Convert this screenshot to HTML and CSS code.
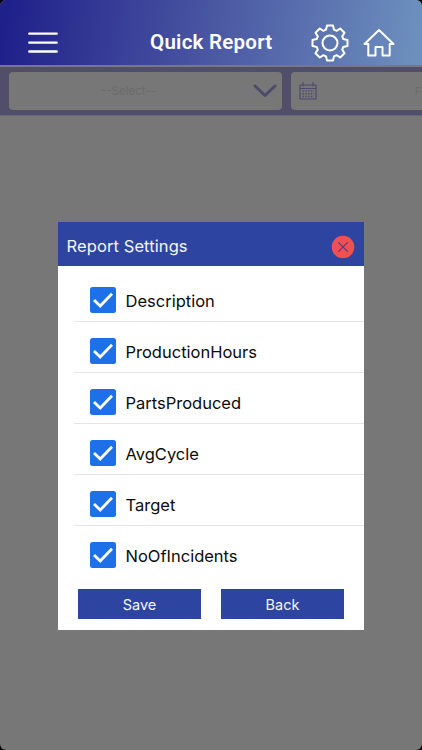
FILE: index.html
```html
<!DOCTYPE html>
<html lang="en">
<head>
<meta charset="utf-8">
<title>Quick Report</title>
<link rel="stylesheet" href="styles.css">
</head>
<body>
<div class="screen">
  <header class="header">
    <svg class="menu" viewBox="0 0 30 22"><path d="M1.3 1.6H28.7M1.3 10.6H28.7M1.3 19.5H28.7"/></svg>
    <h1 class="title"><span>Quick Report</span></h1>
    <svg class="gear" viewBox="-19 -19 38 38"><path d="M-4-13.3L-3-17.5H3L4-13.3L6.6-12.2L10.2-14.5L14.5-10.2L12.2-6.6L13.3-4L17.5-3V3L13.3 4L12.2 6.6L14.5 10.2L10.2 14.5L6.6 12.2L4 13.3L3 17.5H-3L-4 13.3L-6.6 12.2L-10.2 14.5L-14.5 10.2L-12.2 6.6L-13.3 4L-17.5 3V-3L-13.3-4L-12.2-6.6L-14.5-10.2L-10.2-14.5L-6.6-12.2Z"/><circle r="7.5"/></svg>
    <svg class="home" viewBox="0 0 32 30"><path d="M16 2L1.5 16H5.3V27.5H12.5V19H19.5V27.5H26.7V16H30.5Z"/></svg>
  </header>
  <div class="filters">
    <div class="select"><span>--Select--</span><svg class="chevron" viewBox="0 0 24 14"><path d="M2 2L12 11.5L22 2"/></svg></div>
    <div class="date">
      <svg class="calendar" viewBox="0 0 18 18"><path d="M1 3H17V17H1ZM1 6.5H17M4 .5V4M14 .5V4"/><path class="dots" d="M3.5 9H15M3.5 11.8H15M3.5 14.5H15"/></svg>
      <span>F</span>
    </div>
  </div>
  <main class="content">
    <section class="modal">
      <div class="modal-head"><h2><span>Report Settings</span></h2><svg class="close" viewBox="0 0 24 24"><circle cx="12" cy="12" r="11.3"/><path d="M7.6 7.6L16.4 16.4M16.4 7.6L7.6 16.4"/></svg></div>
      <ul class="options">
        <li><svg class="check" viewBox="0 0 26 26"><rect width="26" height="26" rx="2.5"/><path d="M4 13L10.2 19L22 6.8"/></svg><span>Description</span></li>
        <li><svg class="check" viewBox="0 0 26 26"><rect width="26" height="26" rx="2.5"/><path d="M4 13L10.2 19L22 6.8"/></svg><span>ProductionHours</span></li>
        <li><svg class="check" viewBox="0 0 26 26"><rect width="26" height="26" rx="2.5"/><path d="M4 13L10.2 19L22 6.8"/></svg><span>PartsProduced</span></li>
        <li><svg class="check" viewBox="0 0 26 26"><rect width="26" height="26" rx="2.5"/><path d="M4 13L10.2 19L22 6.8"/></svg><span>AvgCycle</span></li>
        <li><svg class="check" viewBox="0 0 26 26"><rect width="26" height="26" rx="2.5"/><path d="M4 13L10.2 19L22 6.8"/></svg><span>Target</span></li>
        <li><svg class="check" viewBox="0 0 26 26"><rect width="26" height="26" rx="2.5"/><path d="M4 13L10.2 19L22 6.8"/></svg><span>NoOfIncidents</span></li>
      </ul>
      <div class="actions"><button>Save</button><button>Back</button></div>
    </section>
  </main>
</div>
</body>
</html>
```
FILE: styles.css
```css
* { box-sizing: border-box; }
body { margin: 0; background: #000; font-family: Inter, "Liberation Sans", sans-serif; }
svg { display: block; flex: none; fill: none; stroke-linecap: round; stroke-linejoin: round; }
.screen { width: 422px; height: 750px; overflow: hidden; border-radius: 6px; background: #777; display: flex; flex-direction: column; }
.header { height: 65px; flex: none; display: flex; padding-left: 28px; background: linear-gradient(98deg, #20208a 2%, #4a57a2 50%, #6c8fbd 98%); stroke: #fff; }
.menu { width: 30px; height: 22px; margin-top: 32px; stroke-width: 2.4; }
.title { margin: 27px 0 0 92px; width: 161px; font: 600 20.5px/30px Roboto, sans-serif; letter-spacing: .25px; color: #fff; white-space: nowrap; }
.gear { width: 38px; height: 38px; margin-top: 24px; stroke-width: 2; }
.home { width: 32px; height: 30px; margin: 28px 0 0 14px; stroke-width: 2; }
.filters { height: 51px; flex: none; display: flex; gap: 9px; padding: 5px 0 5px 9px; background: #504e68; border-top: 2px solid #77778a; border-bottom: 1px solid #686779; }
.select, .date { height: 38px; flex: none; display: flex; align-items: center; background: #777; border-radius: 4px; font-size: 11.5px; color: #6b6b6b; }
.select { width: 273px; padding: 0 5px 0 92px; justify-content: space-between; }
.chevron { width: 24px; height: 14px; stroke: #4d4a6b; stroke-width: 3; }
.date { width: 131px; padding-left: 8px; border-radius: 4px 0 0 4px; }
.calendar { width: 18px; height: 18px; stroke: #4d4a6b; stroke-width: 1.2; }
.calendar .dots { stroke-width: 1.5; stroke-dasharray: 1.4 1.4; stroke-linecap: butt; }
.date span { margin-left: 98px; font-size: 10.5px; }
.content { flex: 1; padding: 106px 58px 0; }
.modal { width: 306px; height: 408px; background: #fff; }
.modal-head { height: 44px; display: flex; align-items: center; justify-content: space-between; padding: 5px 9px 0 8.5px; background: #2d45a0; }
h2 { margin: 0 0 1px; font-size: 16.5px; letter-spacing: .1px; font-weight: 400; color: #f4f5ff; }
.close { width: 24px; height: 24px; fill: #ef5152; stroke: #5b3c73; stroke-width: 1.2; }
.close circle { stroke: none; }
.options { list-style: none; margin: 0; padding: 5px 0 0 16px; }
.options li { height: 51px; display: flex; align-items: center; gap: 10px; padding: 8px 0 0 15.5px; border-bottom: 1px solid #e4e4e7; font-size: 16.5px; color: #0b0b0b; }
.options li span { padding-top: 1px; }
.options li:last-child { border-color: transparent; }
.check { width: 26px; height: 26px; stroke: #fff; stroke-width: 2.8; stroke-linecap: butt; stroke-linejoin: miter; }
.check rect { fill: #1e70e8; stroke: none; }
.actions { display: flex; gap: 20px; padding: 12px 20px 0; }
.actions button { width: 123px; height: 30px; padding: 0; border: 0; background: #2d45a0; color: #f4f5ff; font: 14.5px Inter, sans-serif; }
```
